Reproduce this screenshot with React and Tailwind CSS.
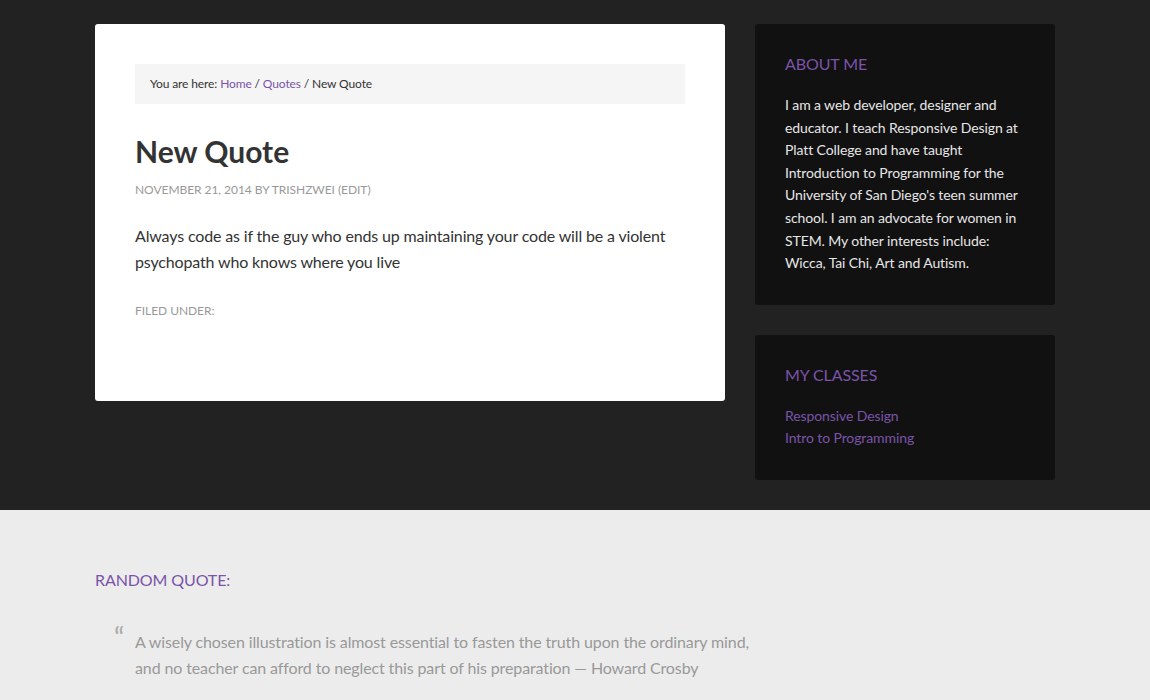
import React from 'react'

const font = { fontFamily: 'Lato, "Open Sans", sans-serif' }

function SidebarBox({ title, children }) {
    return (
        <section className="bg-[#121112] rounded-[3px] p-[30px]">
            <h4 className="text-[16px] leading-[20px] text-[#7a54a8] uppercase mb-[20px] tracking-[-0.1px]">{title}</h4>
            {children}
        </section>
    )
}

export default function App() {
    return (
        <div style={font} className="min-h-[700px] bg-[#ececec]">
            {/* dark content area */}
            <div className="bg-[#222222] pt-[24px] pb-[30px]">
                <div className="w-[960px] mx-auto flex gap-[30px] items-start">
                    <main className="w-[630px] bg-white rounded-[3px] px-[40px] pt-[40px] pb-[81px]">
                        <div className="bg-[#f5f5f5] h-[40px] px-[15px] flex items-center text-[12px] text-[#333] tracking-[-0.12px]">
                            <span>You are here:&nbsp;</span>
                            <a className="text-[#7a54a8]">Home</a>
                            <span>&nbsp;/&nbsp;</span>
                            <a className="text-[#7a54a8]">Quotes</a>
                            <span>&nbsp;/ New Quote</span>
                        </div>

                        <h1 className="mt-[29px] text-[30px] leading-[36px] font-bold text-[#333]">New Quote</h1>
                        <p className="mt-[12px] text-[12px] leading-[18px] uppercase text-[#999] tracking-[-0.05px]">
                            November 21, 2014 by Trishzwei (Edit)
                        </p>

                        <p className="mt-[24px] text-[16px] leading-[26px] text-[#333] tracking-[-0.15px]">
                            Always code as if the guy who ends up maintaining your code will be a violent psychopath who knows where you live
                        </p>

                        <p className="mt-[27px] text-[12px] leading-[18px] uppercase text-[#999] tracking-[-0.05px]">Filed Under:</p>
                    </main>

                    <aside className="w-[300px] flex flex-col gap-[30px]">
                        <SidebarBox title="About Me">
                            <p className="text-[14px] leading-[22.6px] text-[#e6e6e6] tracking-[-0.1px]">
                                I am a web developer, designer and educator. I teach Responsive Design at Platt College and have taught Introduction to Programming for the University of San Diego's teen summer school. I am an advocate for women in STEM. My other interests include: Wicca, Tai Chi, Art and Autism.
                            </p>
                        </SidebarBox>
                        <SidebarBox title="My Classes">
                            <ul className="text-[14px] leading-[22.5px] text-[#7a54a8] tracking-[-0.1px]">
                                <li>Responsive Design</li>
                                <li>Intro to Programming</li>
                            </ul>
                        </SidebarBox>
                    </aside>
                </div>
            </div>

            {/* footer widget */}
            <div className="w-[960px] mx-auto pt-[60px] pb-[20px]">
                <h4 className="text-[16px] leading-[20px] text-[#7a54a8] uppercase tracking-[-0.1px]">Random Quote:</h4>
                <blockquote className="relative mt-[39px] pl-[40px] text-[16px] leading-[26px] text-[#999] w-[680px] tracking-[-0.12px]">
                    <span className="absolute left-[19px] top-[-7px] text-[28px] leading-[30px] text-[#aaa]">&ldquo;</span>
                    A wisely chosen illustration is almost essential to fasten the truth upon the ordinary mind, and no teacher can afford to neglect this part of his preparation — Howard Crosby
                </blockquote>
            </div>
        </div>
    )
}
